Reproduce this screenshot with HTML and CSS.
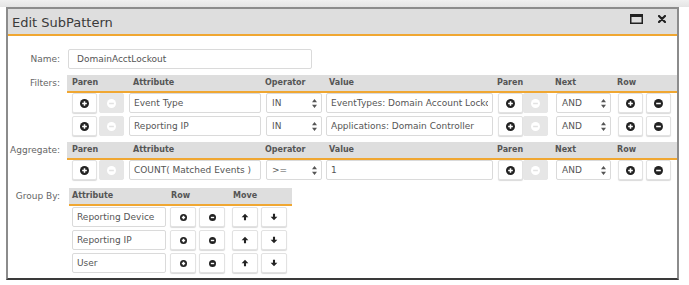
FILE: index.html
```html
<!DOCTYPE html>
<html lang="en">
<head>
    <meta charset="UTF-8">
    <title>Edit SubPattern</title>
    <link rel="stylesheet" href="styles.css">
</head>
<body>
    <div class="dialog">
        <div class="dialog-title">
            <span class="title-text">Edit SubPattern</span>
            <span class="title-tools">
                <svg class="tool-max" width="13" height="10" viewBox="0 0 13 10"><rect x="0.75" y="0.75" width="11.5" height="8.5" fill="none" stroke="#222" stroke-width="1.5"/><rect x="0" y="0" width="13" height="3" fill="#222"/></svg>
                <svg class="tool-close" width="8" height="8" viewBox="0 0 8 8"><path d="M1 1L7 7M7 1L1 7" stroke="#222" stroke-width="2.2" stroke-linecap="round"/></svg>
            </span>
        </div>

        <div class="dialog-body">
            <div class="form-row">
                <label class="form-label label-field">Name:</label>
                <input class="field field-name" type="text" value="DomainAcctLockout">
            </div>

            <!-- filters -->
            <div class="form-row">
                <label class="form-label">Filters:</label>
                <div class="cond-table">
                    <div class="cond-grid cond-head">
                        <span>Paren</span><span></span>
                        <span class="pad-4">Attribute</span>
                        <span class="pad-n1">Operator</span>
                        <span class="pad-3">Value</span>
                        <span class="pad-n1">Paren</span><span></span>
                        <span class="pad-n1">Next</span>
                        <span class="pad-n1">Row</span><span></span>
                    </div>
                    <div class="cond-grid cond-rows">
                        <button class="icon-btn"><svg class="ico" viewBox="0 0 10 10"><circle cx="5" cy="5" r="5" fill="#222"/><path d="M5 2.4V7.6M2.4 5H7.6" stroke="#fff" stroke-width="1.7"/></svg></button>
                        <button class="icon-btn is-off"><svg class="ico" viewBox="0 0 10 10"><circle cx="5" cy="5" r="5" fill="#fff"/><path d="M2.4 5H7.6" stroke="#e2e2e2" stroke-width="1.7"/></svg></button>
                        <input class="field w-attr" type="text" value="Event Type">
                        <div class="select w-op"><span>IN</span><svg class="caret" viewBox="0 0 5 9"><path d="M2.5 0L5 3.3H0ZM0 5.7H5L2.5 9Z" fill="#555"/></svg></div>
                        <input class="field w-value" type="text" value="EventTypes: Domain Account Lockout">
                        <button class="icon-btn"><svg class="ico" viewBox="0 0 10 10"><circle cx="5" cy="5" r="5" fill="#222"/><path d="M5 2.4V7.6M2.4 5H7.6" stroke="#fff" stroke-width="1.7"/></svg></button>
                        <button class="icon-btn is-off"><svg class="ico" viewBox="0 0 10 10"><circle cx="5" cy="5" r="5" fill="#fff"/><path d="M2.4 5H7.6" stroke="#e2e2e2" stroke-width="1.7"/></svg></button>
                        <div class="select w-next"><span>AND</span><svg class="caret" viewBox="0 0 5 9"><path d="M2.5 0L5 3.3H0ZM0 5.7H5L2.5 9Z" fill="#555"/></svg></div>
                        <button class="icon-btn"><svg class="ico" viewBox="0 0 10 10"><circle cx="5" cy="5" r="5" fill="#222"/><path d="M5 2.4V7.6M2.4 5H7.6" stroke="#fff" stroke-width="1.7"/></svg></button>
                        <button class="icon-btn"><svg class="ico" viewBox="0 0 10 10"><circle cx="5" cy="5" r="5" fill="#222"/><path d="M2.4 5H7.6" stroke="#fff" stroke-width="1.7"/></svg></button>

                        <button class="icon-btn"><svg class="ico" viewBox="0 0 10 10"><circle cx="5" cy="5" r="5" fill="#222"/><path d="M5 2.4V7.6M2.4 5H7.6" stroke="#fff" stroke-width="1.7"/></svg></button>
                        <button class="icon-btn is-off"><svg class="ico" viewBox="0 0 10 10"><circle cx="5" cy="5" r="5" fill="#fff"/><path d="M2.4 5H7.6" stroke="#e2e2e2" stroke-width="1.7"/></svg></button>
                        <input class="field w-attr" type="text" value="Reporting IP">
                        <div class="select w-op"><span>IN</span><svg class="caret" viewBox="0 0 5 9"><path d="M2.5 0L5 3.3H0ZM0 5.7H5L2.5 9Z" fill="#555"/></svg></div>
                        <input class="field w-value" type="text" value="Applications: Domain Controller">
                        <button class="icon-btn"><svg class="ico" viewBox="0 0 10 10"><circle cx="5" cy="5" r="5" fill="#222"/><path d="M5 2.4V7.6M2.4 5H7.6" stroke="#fff" stroke-width="1.7"/></svg></button>
                        <button class="icon-btn is-off"><svg class="ico" viewBox="0 0 10 10"><circle cx="5" cy="5" r="5" fill="#fff"/><path d="M2.4 5H7.6" stroke="#e2e2e2" stroke-width="1.7"/></svg></button>
                        <div class="select w-next"><span>AND</span><svg class="caret" viewBox="0 0 5 9"><path d="M2.5 0L5 3.3H0ZM0 5.7H5L2.5 9Z" fill="#555"/></svg></div>
                        <button class="icon-btn"><svg class="ico" viewBox="0 0 10 10"><circle cx="5" cy="5" r="5" fill="#222"/><path d="M5 2.4V7.6M2.4 5H7.6" stroke="#fff" stroke-width="1.7"/></svg></button>
                        <button class="icon-btn"><svg class="ico" viewBox="0 0 10 10"><circle cx="5" cy="5" r="5" fill="#222"/><path d="M2.4 5H7.6" stroke="#fff" stroke-width="1.7"/></svg></button>
                    </div>
                </div>
            </div>

            <!-- aggregate -->
            <div class="form-row">
                <label class="form-label">Aggregate:</label>
                <div class="cond-table">
                    <div class="cond-grid cond-head">
                        <span>Paren</span><span></span>
                        <span class="pad-4">Attribute</span>
                        <span class="pad-n1">Operator</span>
                        <span class="pad-3">Value</span>
                        <span class="pad-n1">Paren</span><span></span>
                        <span class="pad-n1">Next</span>
                        <span class="pad-n1">Row</span><span></span>
                    </div>
                    <div class="cond-grid cond-rows">
                        <button class="icon-btn"><svg class="ico" viewBox="0 0 10 10"><circle cx="5" cy="5" r="5" fill="#222"/><path d="M5 2.4V7.6M2.4 5H7.6" stroke="#fff" stroke-width="1.7"/></svg></button>
                        <button class="icon-btn is-off"><svg class="ico" viewBox="0 0 10 10"><circle cx="5" cy="5" r="5" fill="#fff"/><path d="M2.4 5H7.6" stroke="#e2e2e2" stroke-width="1.7"/></svg></button>
                        <input class="field w-attr" type="text" value="COUNT( Matched Events )">
                        <div class="select w-op"><span>&gt;=</span><svg class="caret" viewBox="0 0 5 9"><path d="M2.5 0L5 3.3H0ZM0 5.7H5L2.5 9Z" fill="#555"/></svg></div>
                        <input class="field w-value" type="text" value="1">
                        <button class="icon-btn"><svg class="ico" viewBox="0 0 10 10"><circle cx="5" cy="5" r="5" fill="#222"/><path d="M5 2.4V7.6M2.4 5H7.6" stroke="#fff" stroke-width="1.7"/></svg></button>
                        <button class="icon-btn is-off"><svg class="ico" viewBox="0 0 10 10"><circle cx="5" cy="5" r="5" fill="#fff"/><path d="M2.4 5H7.6" stroke="#e2e2e2" stroke-width="1.7"/></svg></button>
                        <div class="select w-next"><span>AND</span><svg class="caret" viewBox="0 0 5 9"><path d="M2.5 0L5 3.3H0ZM0 5.7H5L2.5 9Z" fill="#555"/></svg></div>
                        <button class="icon-btn"><svg class="ico" viewBox="0 0 10 10"><circle cx="5" cy="5" r="5" fill="#222"/><path d="M5 2.4V7.6M2.4 5H7.6" stroke="#fff" stroke-width="1.7"/></svg></button>
                        <button class="icon-btn"><svg class="ico" viewBox="0 0 10 10"><circle cx="5" cy="5" r="5" fill="#222"/><path d="M2.4 5H7.6" stroke="#fff" stroke-width="1.7"/></svg></button>
                    </div>
                </div>
            </div>

            <!-- group by -->
            <div class="form-row group-row">
                <label class="form-label">Group By:</label>
                <div class="cond-table group-table">
                    <div class="group-grid cond-head">
                        <span>Attribute</span>
                        <span class="pad-1">Row</span><span></span>
                        <span class="pad-1">Move</span><span></span>
                    </div>
                    <div class="group-grid cond-rows">
                        <input class="field w-group" type="text" value="Reporting Device">
                        <button class="icon-btn"><svg class="ico ico-sm" viewBox="0 0 10 10"><circle cx="5" cy="5" r="5" fill="#222"/><path d="M5 2.6V7.4M2.6 5H7.4" stroke="#fff" stroke-width="2"/></svg></button>
                        <button class="icon-btn"><svg class="ico ico-sm" viewBox="0 0 10 10"><circle cx="5" cy="5" r="5" fill="#222"/><path d="M2.6 5H7.4" stroke="#fff" stroke-width="2"/></svg></button>
                        <button class="icon-btn"><svg class="ico arrow" viewBox="0 0 10 10"><path d="M5 1L9.2 5.4H6.3V9H3.7V5.4H0.8Z" fill="#222"/></svg></button>
                        <button class="icon-btn"><svg class="ico arrow" viewBox="0 0 10 10"><path d="M5 9L9.2 4.6H6.3V1H3.7V4.6H0.8Z" fill="#222"/></svg></button>

                        <input class="field w-group" type="text" value="Reporting IP">
                        <button class="icon-btn"><svg class="ico ico-sm" viewBox="0 0 10 10"><circle cx="5" cy="5" r="5" fill="#222"/><path d="M5 2.6V7.4M2.6 5H7.4" stroke="#fff" stroke-width="2"/></svg></button>
                        <button class="icon-btn"><svg class="ico ico-sm" viewBox="0 0 10 10"><circle cx="5" cy="5" r="5" fill="#222"/><path d="M2.6 5H7.4" stroke="#fff" stroke-width="2"/></svg></button>
                        <button class="icon-btn"><svg class="ico arrow" viewBox="0 0 10 10"><path d="M5 1L9.2 5.4H6.3V9H3.7V5.4H0.8Z" fill="#222"/></svg></button>
                        <button class="icon-btn"><svg class="ico arrow" viewBox="0 0 10 10"><path d="M5 9L9.2 4.6H6.3V1H3.7V4.6H0.8Z" fill="#222"/></svg></button>

                        <input class="field w-group" type="text" value="User">
                        <button class="icon-btn"><svg class="ico ico-sm" viewBox="0 0 10 10"><circle cx="5" cy="5" r="5" fill="#222"/><path d="M5 2.6V7.4M2.6 5H7.4" stroke="#fff" stroke-width="2"/></svg></button>
                        <button class="icon-btn"><svg class="ico ico-sm" viewBox="0 0 10 10"><circle cx="5" cy="5" r="5" fill="#222"/><path d="M2.6 5H7.4" stroke="#fff" stroke-width="2"/></svg></button>
                        <button class="icon-btn"><svg class="ico arrow" viewBox="0 0 10 10"><path d="M5 1L9.2 5.4H6.3V9H3.7V5.4H0.8Z" fill="#222"/></svg></button>
                        <button class="icon-btn"><svg class="ico arrow" viewBox="0 0 10 10"><path d="M5 9L9.2 4.6H6.3V1H3.7V4.6H0.8Z" fill="#222"/></svg></button>
                    </div>
                </div>
            </div>
        </div>
    </div>
</body>
</html>
```

FILE: styles.css
```css
body {
    margin: 0;
    padding: 7px 0 0 6px;
    font-family: "DejaVu Sans", sans-serif;
    font-size: 9px;
    color: #555;
    background: linear-gradient(#f0f0f0 0, #e4e4e4 7px, #fff 7px) no-repeat;
    height: 285px;
    box-sizing: border-box;
    overflow: hidden;
}
.dialog {
    width: 673px;
    box-sizing: border-box;
    background: #fff;
    border: 2px solid #8c8c8c;
    border-bottom-color: #3a3a3a;
}
.dialog-title {
    display: flex;
    align-items: center;
    justify-content: space-between;
    height: 25px;
    padding: 0 11px 0 4px;
    background: #dedede;
    border-bottom: 2px solid #f0a732;
}
.title-text {
    font-size: 13px;
    color: #3a3a3a;
    padding-top: 2px;
}
.title-tools {
    display: flex;
    align-items: center;
    gap: 15px;
    margin-top: -5px;
}
.dialog-body {
    padding: 13px 0 5px 0;
    display: flex;
    flex-direction: column;
    gap: 6px;
}
.form-row {
    display: grid;
    grid-template-columns: 52px 1fr;
    column-gap: 7px;
    align-items: start;
}
.group-row {
    margin-top: 2px;
}
.form-label {
    display: flex;
    justify-content: flex-end;
    line-height: 17px;
    color: #666;
    white-space: nowrap;
}
.label-field {
    line-height: 20px;
}
.field {
    box-sizing: border-box;
    height: 20px;
    padding: 0 4px;
    font: inherit;
    color: #555;
    background: #fff;
    border: 1px solid #dadada;
    border-radius: 2px;
    outline: none;
    min-width: 0;
}
.field-name {
    width: 244px;
    margin-left: 1px;
    padding-left: 8px;
}
.cond-head {
    height: 16px;
    line-height: 16px;
    background: #dedede;
    border-bottom: 2px solid #f0a732;
    font-size: 8px;
    font-weight: bold;
    color: #555;
    white-space: nowrap;
}
.cond-rows {
    padding-top: 1px;
    row-gap: 3px;
    grid-auto-rows: 20px;
}
.cond-grid {
    display: grid;
    grid-template-columns: 27px 30px 137px 60px 172px 25px 33px 62px 28px 26px;
    padding: 0 5px;
}
.group-table {
    justify-self: start;
    margin-left: 2px;
}
.group-grid {
    display: grid;
    grid-template-columns: 98px 29px 33px 29px 26px;
    padding: 0 5px 0 3px;
}
.group-grid.cond-rows {
    padding-top: 1px;
}
.pad-1 { padding-left: 1px; }
.pad-3 { padding-left: 3px; }
.pad-4 { padding-left: 4px; }
.pad-n1 { margin-left: -1px; }
.w-attr { width: 132px; }
.w-op { width: 56px; }
.w-value { width: 167px; }
.w-next { width: 55px; }
.w-group { width: 94px; }
.select {
    box-sizing: border-box;
    height: 20px;
    display: flex;
    align-items: center;
    justify-content: space-between;
    padding: 0 4px 0 5px;
    background: #fff;
    border: 1px solid #dadada;
    border-radius: 2px;
}
.caret {
    width: 5px;
    height: 9px;
}
.icon-btn {
    box-sizing: border-box;
    width: 25px;
    height: 20px;
    padding: 0;
    display: flex;
    align-items: center;
    justify-content: center;
    background: #fff;
    border: 1px solid #e2e2e2;
    border-radius: 2px;
    box-shadow: 0 1px 1px rgba(0, 0, 0, 0.15);
}
.icon-btn.is-off {
    background: #e6e6e6;
    border-color: #e6e6e6;
    box-shadow: none;
}
.group-grid .icon-btn {
    width: 26px;
}
.ico {
    width: 9px;
    height: 9px;
}
.ico-sm {
    width: 7px;
    height: 7px;
}
.arrow {
    width: 8px;
    height: 8px;
}
```
